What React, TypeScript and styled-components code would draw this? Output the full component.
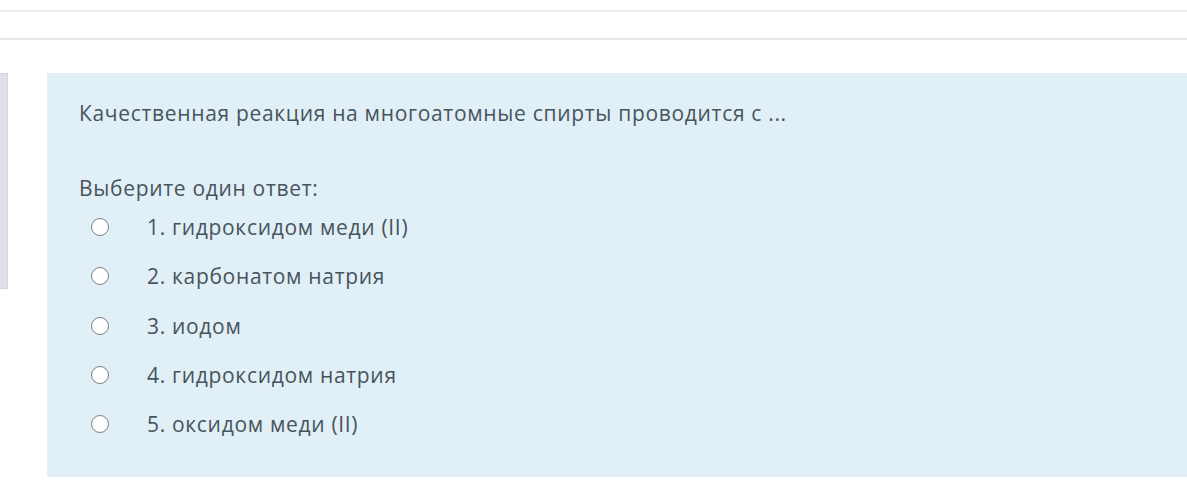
import React from "react";
import styled, { createGlobalStyle } from "styled-components";

const Global = createGlobalStyle`
  html, body { margin: 0; padding: 0; background: #fff; }
  body { font-family: "Open Sans", "Noto Sans", sans-serif; }
`;

const Page = styled.div`
  width: 1187px;
  height: 496px;
  overflow: hidden;
  display: flex;
  flex-direction: column;
`;

const TopBar = styled.div`
  margin-top: 10px;
  height: 26px;
  border-top: 2px solid #ececec;
  border-bottom: 2px solid #e8e8e8;
  background: #fff;
`;

const Body = styled.div`
  margin-top: 33px;
  display: flex;
  align-items: flex-start;
  gap: 39px;
`;

const SideInfo = styled.div`
  width: 7px;
  height: 214px;
  background: #dfe1e8;
  border: 1px solid #d3d6de;
  border-left: none;
`;

const Formulation = styled.div`
  flex: 1;
  background: #e1eff7;
  padding: 26px 32px 0 32px;
  height: 404px;
  box-sizing: border-box;
  color: #47545c;
  font-size: 21px;
  letter-spacing: 0.68px;
`;

const QText = styled.div`
  line-height: 28px;
`;

const Prompt = styled.div`
  margin-top: 47px;
  line-height: 28px;
`;

const AnswerList = styled.div`
  display: flex;
  flex-direction: column;
  gap: 21.3px;
  margin-top: 11px;
`;

const OptionRow = styled.div`
  display: flex;
  align-items: center;
  height: 28px;
  line-height: 28px;
`;

const Radio = styled.span`
  box-sizing: border-box;
  width: 18px;
  height: 18px;
  border-radius: 50%;
  border: 1.6px solid #7b8085;
  background: #fff;
  margin-left: 12px;
  margin-right: 38px;
  flex: none;
`;

const answers = [
  "1. гидроксидом меди (II)",
  "2. карбонатом натрия",
  "3. иодом",
  "4. гидроксидом натрия",
  "5. оксидом меди (II)",
];

export default function App() {
  return (
    <Page>
      <Global />
      <TopBar />
      <Body>
        <SideInfo />
        <Formulation>
          <QText>Качественная реакция на многоатомные спирты проводится с ...</QText>
          <Prompt>Выберите один ответ:</Prompt>
          <AnswerList>
            {answers.map((a) => (
              <OptionRow key={a}>
                <Radio />
                <span>{a}</span>
              </OptionRow>
            ))}
          </AnswerList>
        </Formulation>
      </Body>
    </Page>
  );
}
